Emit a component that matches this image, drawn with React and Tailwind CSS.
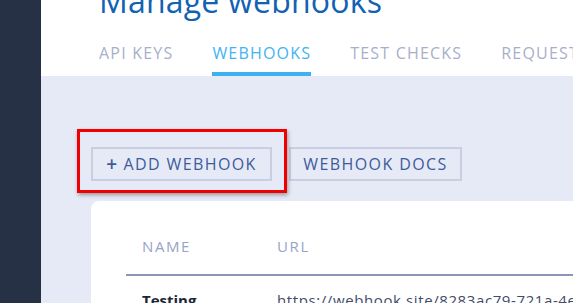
import React from "react";

const tabs = ["API KEYS", "WEBHOOKS", "TEST CHECKS", "REQUESTS"];

const App = () => {
  return (
    <div className="flex h-[303px] w-[573px] overflow-hidden font-['Open_Sans',sans-serif]">
      <div className="w-[41px] shrink-0 bg-[#263145]" />
      <div className="flex min-w-0 flex-1 flex-col bg-[#e6eaf6]">
        {/* header */}
        <div className="flex h-[76px] shrink-0 flex-col bg-white pl-[58px]">
          <h1 className="-mt-[21px] whitespace-nowrap text-[32px] leading-[44px] font-normal tracking-[0.2px] text-[#1262b3]">
            Manage webhooks
          </h1>
          <div className="mt-auto flex gap-[39px] whitespace-nowrap">
            {tabs.map((tab) => (
              <div
                key={tab}
                className={
                  tab === "WEBHOOKS"
                    ? "border-b-4 border-[#3cb1f1] pb-[9px] text-[16px] leading-[20px] tracking-[1.2px] text-[#41b3f3]"
                    : "border-b-4 border-transparent pb-[9px] text-[16px] leading-[20px] tracking-[1.2px] text-[#a8afcb]"
                }
              >
                {tab}
              </div>
            ))}
          </div>
        </div>

        {/* content */}
        <div className="flex flex-col pl-[50px] pt-[71px]">
          <div className="flex gap-[17px]">
            <div className="relative">
              <button className="flex h-[34px] w-[181px] items-center justify-center border-2 border-[#c9cee0] text-[16px] tracking-[1.4px] text-[#3d5b9b]">
                <span className="mr-[5px] text-[19px] leading-none font-semibold">+</span>
                ADD WEBHOOK
              </button>
              <span className="pointer-events-none absolute -top-[18px] -bottom-[12px] -left-[14px] -right-[15px] border-[3px] border-[#f00000] shadow-[1px_2px_4px_rgba(0,0,0,0.35)]" />
            </div>
            <button className="flex h-[34px] w-[173px] items-center justify-center border-2 border-[#c9cee0] text-[16px] tracking-[1.4px] text-[#3d5b9b]">
              WEBHOOK DOCS
            </button>
          </div>

          <div className="mt-[20px] rounded-tl-[8px] bg-white pl-[35px] pt-[34px]">
            <div className="flex border-b-2 border-[#8a96b8] pb-[17px] text-[15px] leading-[22px] tracking-[1.6px] text-[#97a3c6]">
              <div className="w-[151px] shrink-0 pl-[16px]">NAME</div>
              <div>URL</div>
            </div>
            <div className="flex whitespace-nowrap pt-[13px] text-[15px] leading-[22px]">
              <div className="w-[151px] shrink-0 pl-[16px] font-bold text-[#1d2638]">Testing</div>
              <div className="tracking-[0.6px] text-[#414b6a]">https://webhook.site/8283ac79-721a-4e5b-9c2d</div>
            </div>
          </div>
        </div>
      </div>
    </div>
  );
};

export default App;
